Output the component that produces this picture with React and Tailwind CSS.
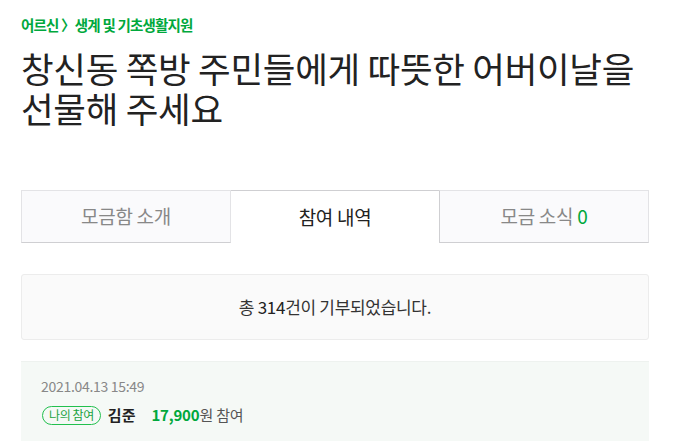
export default function App() {
  const font = { fontFamily: '"Noto Sans CJK KR", "Noto Sans", sans-serif' };
  return (
    <div className="w-[674px] h-[441px] overflow-hidden bg-white" style={font}>
      <div className="ml-[21px] w-[628px] pt-[15px]">
        <div className="text-[14.5px] font-bold text-[#00a83c] tracking-[-0.8px] leading-[20px]">
          어르신 〉생계 및 기초생활지원
        </div>
        <h1 className="mt-[13px] text-[35.5px] leading-[40px] text-[#222] tracking-[-0.3px]">
          창신동 쪽방 주민들에게 따뜻한 어버이날을
          <br />
          선물해 주세요
        </h1>
        <div className="mt-[62px] flex h-[53px]">
          <div className="flex-1 flex items-center justify-center bg-[#fafafc] border border-[#e3e3e6] border-b-[#cfcfd2] text-[19px] text-[#888] tracking-[-0.3px]">
            모금함 소개
          </div>
          <div className="flex-1 flex items-center justify-center bg-white border-t border-[#cfcfd2] text-[19px] text-[#222] tracking-[-0.3px]">
            참여 내역
          </div>
          <div className="flex-1 flex items-center justify-center bg-[#fafafc] border border-[#e3e3e6] border-b-[#cfcfd2] border-l-[#cfcfd2] text-[19px] text-[#888] tracking-[-0.3px]">
            모금 소식&nbsp;<span className="text-[#00a83c]">0</span>
          </div>
        </div>
        <div className="mt-[31px] h-[66px] flex items-center justify-center bg-[#fafafa] border border-[#ececec] rounded-[3px] text-[17px] text-[#333] tracking-[-0.3px]">
          총&nbsp;<span className="text-[#222]">314</span>건이 기부되었습니다.
        </div>
        <div className="mt-[21px] h-[90px] bg-[#f5f9f6] border-t border-[#eef2ef] px-[20px] pt-[14px]">
          <div className="text-[14px] leading-[20px] text-[#888] tracking-[-0.3px]">2021.04.13 15:49</div>
          <div className="mt-[8px] flex items-center">
            <span className="inline-flex items-center h-[19px] px-[6px] ml-px rounded-full border border-[#22c04e] text-[12px] text-[#1aa33f] leading-none tracking-[-0.4px]">
              나의 참여
            </span>
            <span className="ml-[7px] text-[15px] font-bold text-[#222]">김준</span>
            <span className="ml-[16px] text-[15px] font-bold text-[#00a83c] tracking-[-0.2px]">17,900</span>
            <span className="text-[15px] text-[#555] tracking-[-0.2px]">원 참여</span>
          </div>
        </div>
      </div>
    </div>
  );
}
